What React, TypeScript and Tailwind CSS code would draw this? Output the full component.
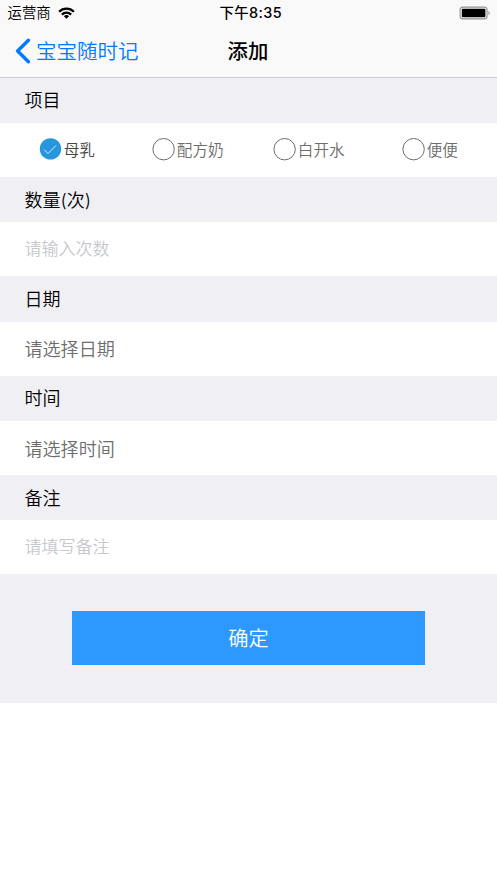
import { useState } from "react";
import cx from "clsx";

const typeList = ["母乳", "配方奶", "白开水", "便便"];

const fieldList = [
  { title: "数量(次)", text: "请输入次数", input: true },
  { title: "日期", text: "请选择日期", input: false },
  { title: "时间", text: "请选择时间", input: false },
  { title: "备注", text: "请填写备注", input: true },
];

const StatusBar = () => {
  return (
    <div className="grid h-[26px] grid-cols-3 items-center pl-[7.5px] pr-[6px] text-[14.4px] leading-none">
      <div className="flex items-center gap-[7px]">
        <span className="pt-px font-[350]">运营商</span>
        <svg className="-mt-px" width="17" height="12" viewBox="0 0 18 13" fill="none" stroke="#000" strokeWidth="2.5">
          <path d="M1 5.1C5.4 .7 12.6 .7 17 5.1" />
          <path d="M4 8.2c2.8-2.7 7.2-2.7 10 0" />
          <path d="M9 12.7 6.2 9.9c1.6-1.5 4-1.5 5.6 0z" fill="#000" stroke="none" />
        </svg>
      </div>
      <div className="whitespace-nowrap pl-[3px] text-center font-medium tracking-[0.4px]">下午8:35</div>
      <svg className="-mt-px justify-self-end" width="32" height="14" viewBox="0 0 32 14">
        <rect x="1.1" y="1.1" width="27" height="11.8" rx="3" fill="none" stroke="#929292" strokeWidth="1.1" />
        <rect x="2.8" y="2.8" width="23.6" height="8.4" rx="1" fill="#000" />
        <path d="M29.5 4.8c1.7.7 1.7 3.7 0 4.4z" fill="#929292" />
      </svg>
    </div>
  );
};

const Header = () => {
  return (
    <header className="h-[78px] border-b border-[#cdcdd0] bg-[#f9f9f9]">
      <StatusBar />
      <nav className="grid h-[50px] grid-cols-3 items-center pl-[15px]">
        <button className="flex items-center gap-[5px] whitespace-nowrap text-[20.5px] leading-none text-[#007aff]">
          <svg className="shrink-0" width="16" height="26" viewBox="0 0 16 26" fill="none" stroke="currentColor" strokeWidth="3.4" strokeLinecap="round" strokeLinejoin="round">
            <path d="M13.4 2.2 2.6 13l10.8 10.8" />
          </svg>
          <span className="pt-[2px] font-[350]">宝宝随时记</span>
        </button>
        <h1 className="pr-[16px] pt-[2px] text-center text-[20.4px] font-medium leading-none">添加</h1>
      </nav>
    </header>
  );
};

const Title = ({ children }: { children: string }) => {
  return (
    <h2 className="flex h-[45.4px] items-center bg-[#efeff4] pl-[24.4px] pt-[2px] text-[18px] font-[350] leading-none">
      {children}
    </h2>
  );
};

const Radio = ({ checked }: { checked: boolean }) => {
  return (
    <svg className="shrink-0" width="23" height="23" viewBox="0 0 23 23" fill="none">
      {checked ? (
        <>
          <circle cx="11.5" cy="10.9" r="10.7" fill="#2797dd" />
          <path d="m5.2 11.7 3.8 3.8 8-8" stroke="#fff" strokeWidth=".8" />
        </>
      ) : (
        <circle cx="11.6" cy="11.2" r="10.7" stroke="#6d6d6d" />
      )}
    </svg>
  );
};

const App = () => {
  const [type, setType] = useState("母乳");

  return (
    <div className="min-h-screen bg-white font-['Inter','Noto_Sans_CJK_SC',sans-serif] text-black">
      <Header />
      <main className="h-[625px] bg-[#efeff4]">
        <div className="-mt-[0.5px]">
          <Title>项目</Title>
          <div className="grid h-[54px] grid-cols-4 items-center bg-white px-[6.5px] text-[15.6px] leading-none">
            {typeList.map((item) => (
              <button
                key={item}
                className={cx(
                  "flex items-center justify-center gap-[1.5px] font-[350]",
                  type === item ? "text-[#444]" : "text-[#6d6d6d]"
                )}
                onClick={() => setType(item)}
              >
                <Radio checked={type === item} />
                <span className="pt-px">{item}</span>
              </button>
            ))}
          </div>
          {fieldList.map((field) => (
            <section key={field.title}>
              <Title>{field.title}</Title>
              <div className="flex h-[54px] items-center bg-white pl-[24.4px] leading-none">
                {field.input ? (
                  <input
                    className="w-full text-[17px] font-[350] outline-none placeholder:text-[#c7c7cd]"
                    placeholder={field.text}
                  />
                ) : (
                  <span className="pt-px text-[18.1px] font-[350] text-[#6d6d6d]">{field.text}</span>
                )}
              </div>
            </section>
          ))}
        </div>
        <button className="mx-auto mt-[36.2px] flex h-[54px] w-[353px] items-center justify-center bg-[#2d98ff] pt-[3px] text-[20.3px] font-[350] leading-none text-white">
          确定
        </button>
      </main>
    </div>
  );
};

export default App;
